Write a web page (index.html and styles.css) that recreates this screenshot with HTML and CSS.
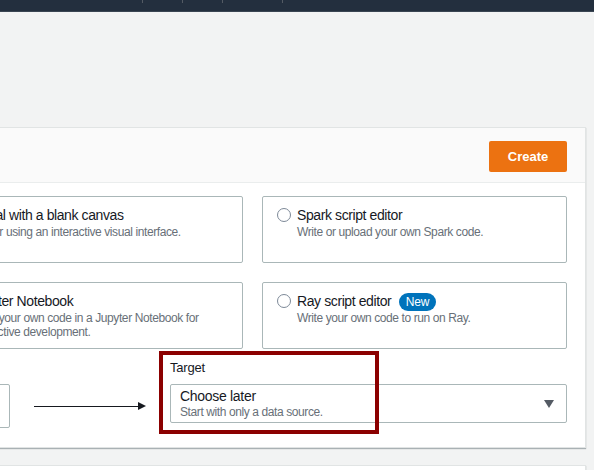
FILE: index.html
```html
<!DOCTYPE html>
<html lang="en">
<head>
    <meta charset="UTF-8">
    <meta name="viewport" content="width=device-width, initial-scale=1.0">
    <title>Create job</title>
    <link rel="stylesheet" href="styles.css">
</head>
<body>
    <nav class="topbar">
        <span class="topbar-item"></span>
        <span class="topbar-item"></span>
        <span class="topbar-item last"></span>
    </nav>
    <main class="page">
        <section class="panel">
            <div class="panel-header">
                <button class="btn-primary">Create</button>
            </div>
            <div class="panel-body">
                <div class="options">
                    <label class="option">
                        <span class="radio"></span>
                        <span class="option-text">
                            <span class="option-title">Visual with a blank canvas</span>
                            <span class="option-desc">Author using an interactive visual interface.</span>
                        </span>
                    </label>
                    <label class="option">
                        <span class="radio"></span>
                        <span class="option-text">
                            <span class="option-title">Spark script editor</span>
                            <span class="option-desc">Write or upload your own Spark code.</span>
                        </span>
                    </label>
                    <label class="option">
                        <span class="radio"></span>
                        <span class="option-text">
                            <span class="option-title">Jupyter Notebook</span>
                            <span class="option-desc">Write your own code in a Jupyter Notebook for interactive development.</span>
                        </span>
                    </label>
                    <label class="option">
                        <span class="radio"></span>
                        <span class="option-text">
                            <span class="option-title">Ray script editor <span class="badge">New</span></span>
                            <span class="option-desc">Write your own code to run on Ray.</span>
                        </span>
                    </label>
                </div>

                <div class="flow">
                    <div class="field source">
                        <div class="field-label">Source</div>
                        <div class="select tall">
                            <span class="select-main">Amazon S3</span>
                        </div>
                    </div>
                    <div class="arrow">
                        <span class="arrow-line"></span>
                        <span class="arrow-head"></span>
                    </div>
                    <div class="field target">
                        <div class="field-label">Target</div>
                        <div class="select">
                            <span class="select-text">
                                <span class="select-main">Choose later</span>
                                <span class="select-sub">Start with only a data source.</span>
                            </span>
                            <span class="caret"></span>
                        </div>
                        <div class="highlight"></div>
                    </div>
                </div>
            </div>
        </section>
        <section class="panel next"></section>
    </main>
</body>
</html>
```

FILE: styles.css
```css
body {
    margin: 0;
    background-color: #f2f3f3;
    font-family: "Liberation Sans", Arial, sans-serif;
    color: #16191f;
    overflow: hidden;
}

/* top navigation */
.topbar {
    height: 11px;
    background-color: #232f3e;
    border-bottom: 1px solid #3a4552;
    display: flex;
    padding-left: 142px;
}
.topbar-item {
    box-sizing: border-box;
    width: 40px;
    height: 3px;
    border-left: 1px solid #545b64;
}
.topbar-item.last {
    width: 61px;
    border-right: 1px solid #545b64;
}

.page {
    padding: 115px 8px 0 0;
}

.panel {
    margin-left: -82px;
    background-color: #fff;
    border: 1px solid #e1e4e4;
    box-shadow: 0 1px 1px rgba(0, 28, 36, 0.3);
}
.panel-header {
    background-color: #fafafa;
    border-bottom: 1px solid #eaeded;
    display: flex;
    justify-content: flex-end;
    padding: 13px 18px 10px 20px;
}
.btn-primary {
    background-color: #ec7211;
    color: #fff;
    border: none;
    border-radius: 2px;
    font-family: inherit;
    font-weight: bold;
    font-size: 13px;
    width: 78px;
    height: 31px;
    padding: 0;
}

.panel-body {
    padding: 13px 18px 19px 20px;
}

/* job type options */
.options {
    display: grid;
    grid-template-columns: 1fr 305px;
    gap: 19px;
}
.option {
    display: flex;
    align-items: flex-start;
    gap: 6px;
    height: 67px;
    box-sizing: border-box;
    border: 1px solid #aab7b8;
    border-radius: 2px;
    padding: 8px 14px;
}
.option:nth-child(odd) {
    padding-left: 10px;
}
.radio {
    width: 12px;
    height: 12px;
    border: 1px solid #7d8998;
    border-radius: 50%;
    flex-shrink: 0;
    margin-top: 3px;
}
.option-text {
    display: flex;
    flex-direction: column;
}
.option-title {
    font-size: 14px;
    line-height: 20px;
    letter-spacing: -0.4px;
}
.option-desc {
    font-size: 12px;
    line-height: 14px;
    color: #687078;
    letter-spacing: -0.4px;
}
.badge {
    display: inline-block;
    background-color: #0073bb;
    color: #fff;
    font-size: 12px;
    line-height: 18px;
    padding: 0 7px;
    border-radius: 9px;
    margin-left: 4px;
    letter-spacing: -0.2px;
}

/* source -> target */
.flow {
    display: grid;
    grid-template-columns: 71px 160px 1fr;
    margin-top: 11px;
}
.field {
    display: flex;
    flex-direction: column;
}
.field.target {
    position: relative;
}
.field-label {
    font-size: 13px;
    line-height: 16px;
    margin-bottom: 8px;
    letter-spacing: -0.2px;
}
.select {
    display: flex;
    align-items: center;
    justify-content: space-between;
    height: 39px;
    box-sizing: border-box;
    border: 1px solid #aab7b8;
    border-radius: 2px;
    padding: 0 12px 0 9px;
}
.select.tall {
    height: 44px;
}
.select-text {
    display: flex;
    flex-direction: column;
}
.select-main {
    font-size: 14px;
    line-height: 17px;
    letter-spacing: -0.3px;
}
.select-sub {
    font-size: 12px;
    line-height: 14px;
    color: #687078;
    letter-spacing: -0.4px;
}
.caret {
    width: 0;
    height: 0;
    border-left: 5px solid transparent;
    border-right: 5px solid transparent;
    border-top: 8px solid #545b64;
}

.arrow {
    display: flex;
    align-items: center;
    padding: 24px 0 0 24px;
}
.arrow-line {
    width: 104px;
    height: 1px;
    background-color: #16191f;
}
.arrow-head {
    width: 0;
    height: 0;
    border-top: 4px solid transparent;
    border-bottom: 4px solid transparent;
    border-left: 8px solid #16191f;
}

/* annotation box */
.highlight {
    position: absolute;
    left: -11px;
    top: -9px;
    width: 212px;
    height: 75px;
    border: 4px solid #8b0000;
}

.panel.next {
    margin-top: 17px;
    height: 30px;
}
```
